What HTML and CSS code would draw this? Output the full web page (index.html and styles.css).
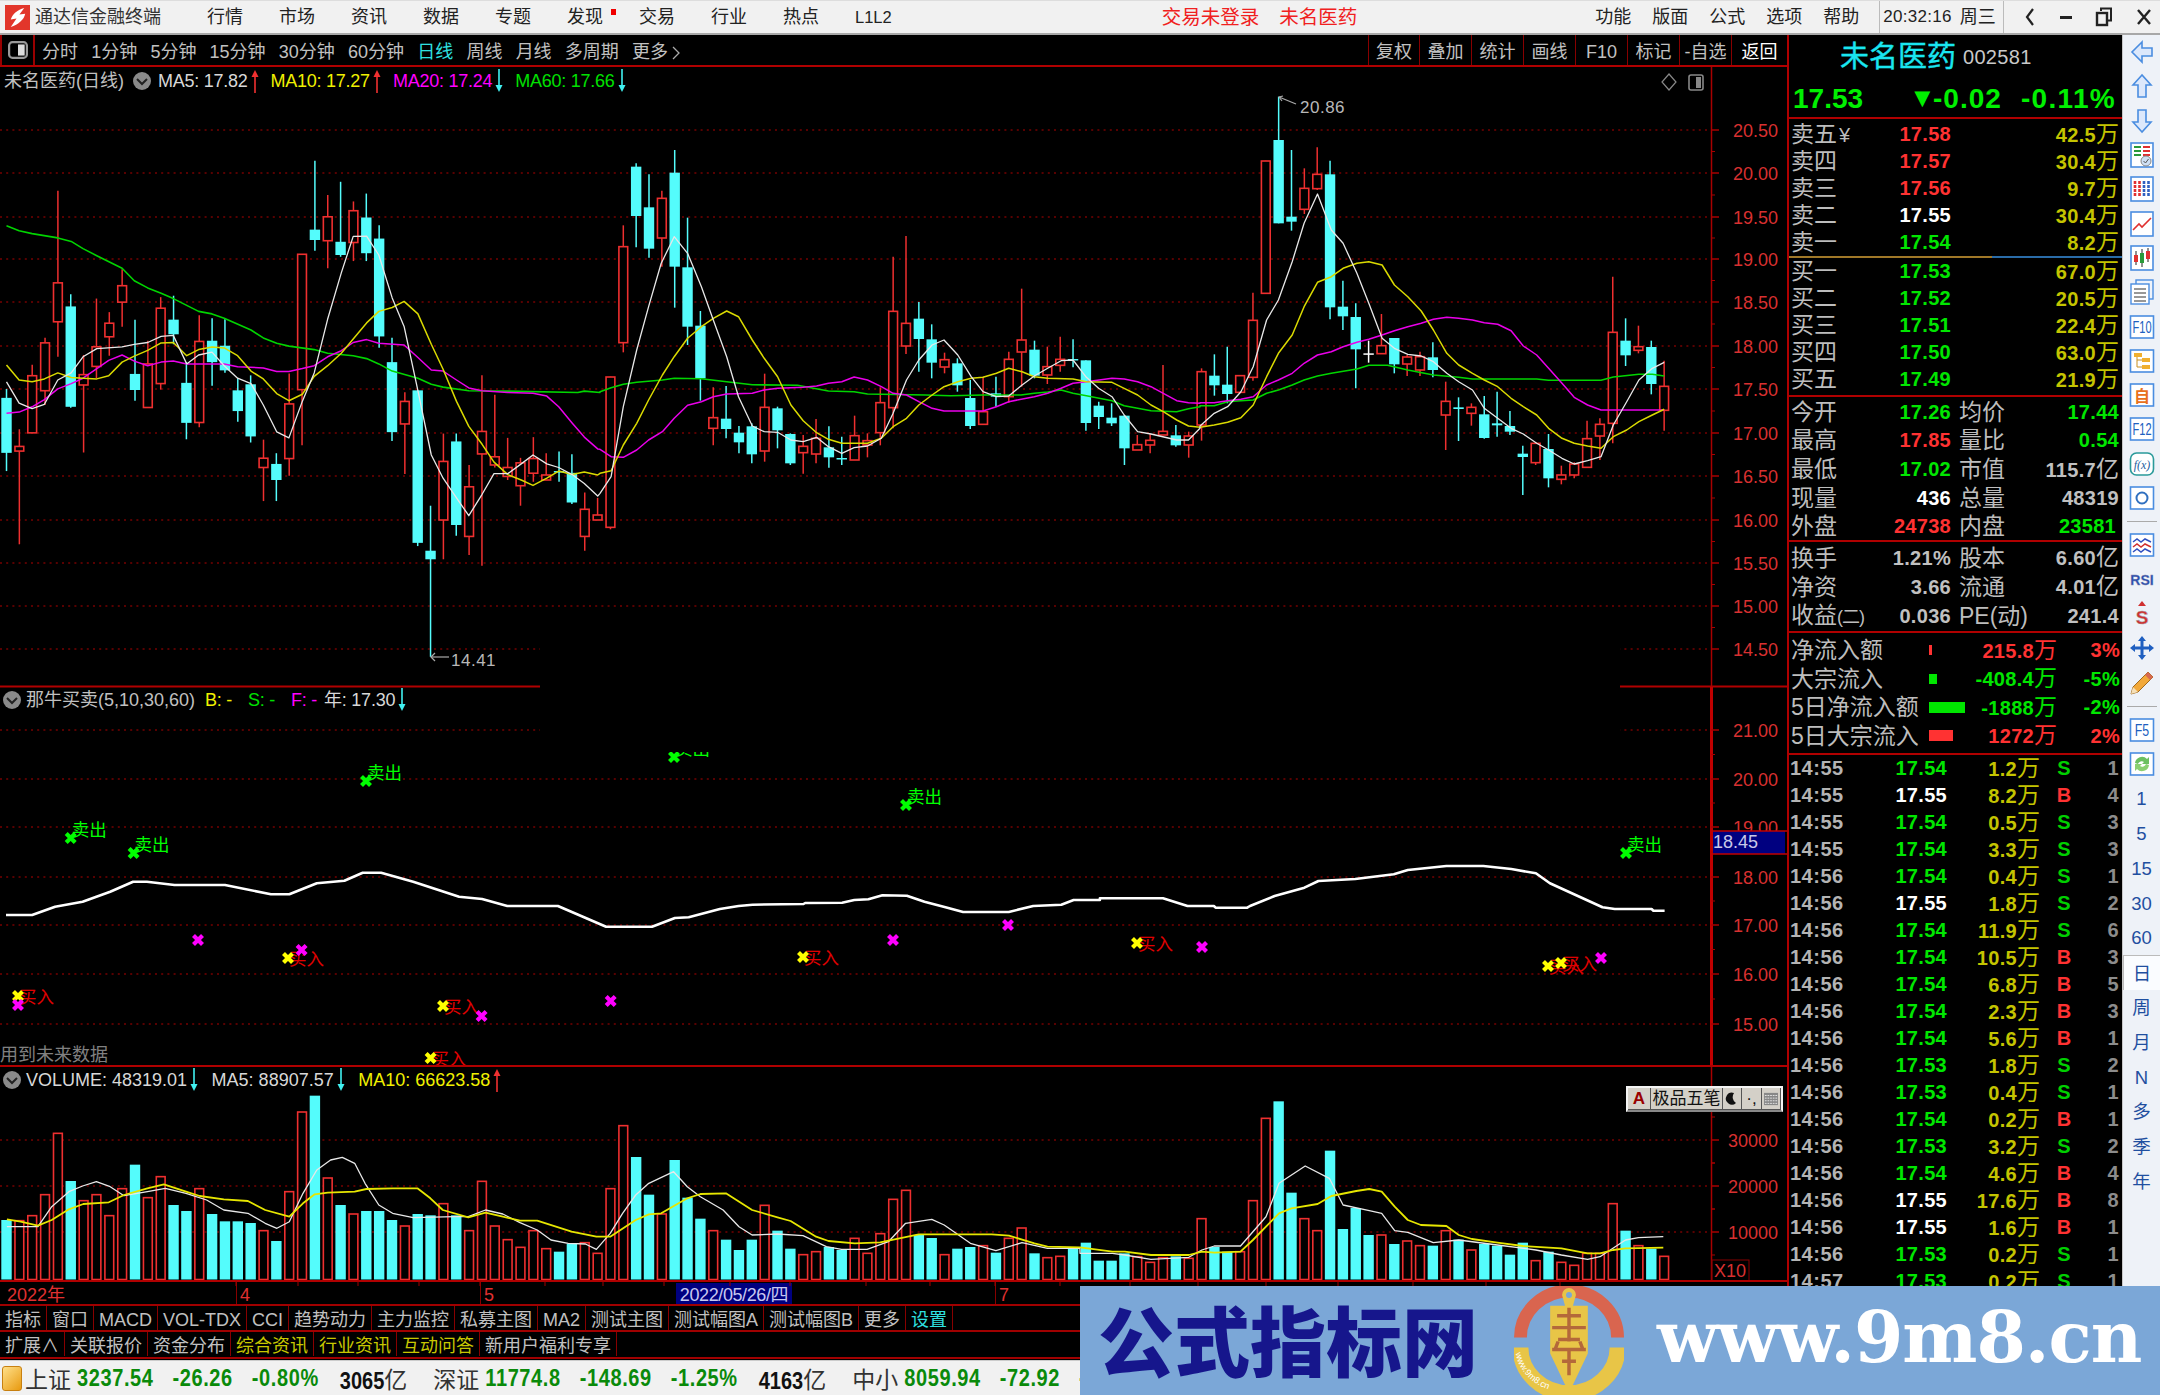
FILE: index.html
```html
<!DOCTYPE html>
<html lang="zh-CN">
<head>
<meta charset="utf-8">
<title>通达信金融终端</title>
<link rel="stylesheet" href="styles.css">
</head>
<body>
<svg class="defs" width="0" height="0">
  <symbol id="ar-up" viewBox="0 0 8 24"><path d="M4 24V3" stroke="currentColor" stroke-width="1.6"/><path d="M0.5 8 4 1l3.500 7z" fill="currentColor"/></symbol>
  <symbol id="ar-down" viewBox="0 0 8 24"><path d="M4 0v21" stroke="currentColor" stroke-width="1.6"/><path d="M0.500 16 4 23l3.500-7z" fill="currentColor"/></symbol>
  <symbol id="chev" viewBox="0 0 18 18"><circle cx="9" cy="9" r="9" fill="#8a8a8a"/><path d="M4 7l5 5 5-5" fill="none" stroke="#222" stroke-width="2"/></symbol>
</svg>

<header class="topbar">
  <svg class="logo" viewBox="0 0 26 26"><rect width="26" height="26" fill="#e2362b"/><path d="M20 3C13 5 8 9 6 15l6-1-6 9c8-3 14-8 15-14l-6 1z" fill="#fff"/></svg>
  <span class="app-title">通达信金融终端</span>
  <nav class="menu">
    <span>行情</span><span>市场</span><span>资讯</span><span>数据</span><span>专题</span><span class="dot">发现</span><span>交易</span><span>行业</span><span>热点</span><span class="l1">L1L2</span>
  </nav>
  <span class="alert first">交易未登录</span>
  <span class="alert">未名医药</span>
  <nav class="menu right">
    <span>功能</span><span>版面</span><span>公式</span><span>选项</span><span>帮助</span>
  </nav>
  <div class="clock"><span class="clock-t">20:32:16</span><span>周三</span></div>
  <div class="winctl">
    <svg viewBox="0 0 12 20"><path d="M9 2 3 10l6 8" fill="none" stroke="#222" stroke-width="2.200"/></svg>
    <svg viewBox="0 0 14 20"><rect x="1" y="9" width="12" height="3" fill="#222"/></svg>
    <svg viewBox="0 0 18 20"><path d="M6 4V1.500h10v12h-3" fill="none" stroke="#222" stroke-width="2"/><rect x="2" y="6" width="10" height="12" fill="none" stroke="#222" stroke-width="2.400"/></svg>
    <svg viewBox="0 0 16 20"><path d="M2 3l12 14M14 3 2 17" stroke="#222" stroke-width="2.400"/></svg>
  </div>
</header>

<main class="main">
  <section class="left">
    <div class="toolbar">
      <div class="tb-icon"><svg viewBox="0 0 18 18"><rect x="1" y="2" width="16" height="14" rx="3" fill="none" stroke="#999" stroke-width="2"/><rect x="9" y="4" width="6" height="10" fill="#ddd"/></svg></div>
      <div class="tb-periods">
        <span>分时</span><span>1分钟</span><span>5分钟</span><span>15分钟</span><span>30分钟</span><span>60分钟</span><span class="on">日线</span><span>周线</span><span>月线</span><span>多周期</span><span class="more">更多<svg viewBox="0 0 8 16"><path d="M1 2l6 6-6 6" fill="none" stroke="#aaa" stroke-width="1.300"/></svg></span>
      </div>
      <div class="tb-tools">
        <span class="n">复权</span><span>叠加</span><span>统计</span><span>画线</span><span>F10</span><span>标记</span><span>-自选</span><span class="w">返回</span>
      </div>
    </div>

    <div class="pane pane-price">
      <svg id="svgPrice" class="canvas" viewBox="0 67 1787 620"></svg>
      <div class="legend">
        <span class="lg-name">未名医药(日线)</span>
        <svg class="chev"><use href="#chev"/></svg>
        <span class="lg lg-w">MA5: 17.82</span><svg class="ar c-r"><use href="#ar-up"/></svg>
        <span class="lg lg-y">MA10: 17.27</span><svg class="ar c-r"><use href="#ar-up"/></svg>
        <span class="lg lg-m">MA20: 17.24</span><svg class="ar c-c"><use href="#ar-down"/></svg>
        <span class="lg lg-g">MA60: 17.66</span><svg class="ar c-c"><use href="#ar-down"/></svg>
      </div>
    </div>

    <div class="pane pane-ind">
      <svg id="svgInd" class="canvas" viewBox="0 687 1787 380"></svg>
      <div class="legend legend-ind">
        <svg class="chev first"><use href="#chev"/></svg>
        <span class="lg-name">那牛买卖(5,10,30,60)</span>
        <span class="lg lg-y">B: -</span>
        <span class="lg lg-g">S: -</span>
        <span class="lg lg-m">F: -</span>
        <span class="lg lg-w year">年: 17.30</span><svg class="ar c-c"><use href="#ar-down"/></svg>
      </div>
      <span class="future">用到未来数据</span>
    </div>

    <div class="pane pane-vol">
      <svg id="svgVol" class="canvas" viewBox="0 1067 1787 215"></svg>
      <div class="legend legend-vol">
        <svg class="chev first"><use href="#chev"/></svg>
        <span class="lg lg-w">VOLUME: 48319.01</span><svg class="ar c-c"><use href="#ar-down"/></svg>
        <span class="lg lg-w">MA5: 88907.57</span><svg class="ar c-c"><use href="#ar-down"/></svg>
        <span class="lg lg-y">MA10: 66623.58</span><svg class="ar c-r"><use href="#ar-up"/></svg>
      </div>
      <div class="ime">
        <span class="ime-a">A</span><span class="ime-t">极品五笔</span>
        <span class="ime-b"><svg viewBox="0 0 12 14"><path d="M8 1a6 6 0 1 0 2 10A7 7 0 0 1 8 1z" fill="#111"/></svg></span>
        <span class="ime-b">·,</span>
        <span class="ime-b"><svg viewBox="0 0 16 14"><rect width="16" height="14" fill="#888"/><path d="M1 3h14M1 6h14M1 9h14M1 12h14" stroke="#eee" stroke-dasharray="2 1"/></svg></span>
      </div>
    </div>

    <div class="datebar">
      <span class="d d1">2022年</span><span class="d d2">4</span><span class="d d3">5</span><span class="d d4">2022/05/26/四</span><span class="d d5"></span><span class="d d6">7</span>
    </div>
    <div class="tabs">
      <span>指标</span><span>窗口</span><span>MACD</span><span>VOL-TDX</span><span>CCI</span><span>趋势动力</span><span>主力监控</span><span>私募主图</span><span>MA2</span><span>测试主图</span><span>测试幅图A</span><span>测试幅图B</span><span>更多</span><span class="cy">设置</span>
    </div>
    <div class="tabs">
      <span>扩展∧</span><span>关联报价</span><span>资金分布</span><span class="ol">综合资讯</span><span class="ol">行业资讯</span><span class="ol">互动问答</span><span>新用户福利专享</span>
    </div>
  </section>

  <aside class="panel">
    <div class="head">
      <div class="name-row"><span class="stock">未名医药</span><span class="code">002581</span></div>
      <div class="price-row"><span class="p-now">17.53</span><span class="p-tri">▼</span><span class="p-chg">-0.02</span><span class="p-pct">-0.11%</span></div>
    </div>
    <div class="book">
      <div class="bk"><span>卖五<i class="yen">¥</i></span><b class="r">17.58</b><b class="o">42.5<i>万</i></b></div>
      <div class="bk"><span>卖四</span><b class="r">17.57</b><b class="o">30.4<i>万</i></b></div>
      <div class="bk"><span>卖三</span><b class="r">17.56</b><b class="o">9.7<i>万</i></b></div>
      <div class="bk"><span>卖二</span><b class="w">17.55</b><b class="o">30.4<i>万</i></b></div>
      <div class="bk"><span>卖一</span><b class="g">17.54</b><b class="o">8.2<i>万</i></b></div>
    </div>
    <div class="split"></div>
    <div class="book buy">
      <div class="bk"><span>买一</span><b class="g">17.53</b><b class="o">67.0<i>万</i></b></div>
      <div class="bk"><span>买二</span><b class="g">17.52</b><b class="o">20.5<i>万</i></b></div>
      <div class="bk"><span>买三</span><b class="g">17.51</b><b class="o">22.4<i>万</i></b></div>
      <div class="bk"><span>买四</span><b class="g">17.50</b><b class="o">63.0<i>万</i></b></div>
      <div class="bk"><span>买五</span><b class="g">17.49</b><b class="o">21.9<i>万</i></b></div>
    </div>
    <div class="stats">
      <div class="st"><span>今开</span><b class="g">17.26</b><span class="l2">均价</span><b class="g">17.44</b></div>
      <div class="st"><span>最高</span><b class="r">17.85</b><span class="l2">量比</span><b class="g">0.54</b></div>
      <div class="st"><span>最低</span><b class="g">17.02</b><span class="l2">市值</span><b class="gy">115.7<i>亿</i></b></div>
      <div class="st"><span>现量</span><b class="w">436</b><span class="l2">总量</span><b class="gy">48319</b></div>
      <div class="st"><span>外盘</span><b class="r">24738</b><span class="l2">内盘</span><b class="g pad">23581</b></div>
    </div>
    <div class="stats mid">
      <div class="st"><span>换手</span><b class="gy">1.21%</b><span class="l2">股本</span><b class="gy">6.60<i>亿</i></b></div>
      <div class="st"><span>净资</span><b class="gy">3.66</b><span class="l2">流通</span><b class="gy">4.01<i>亿</i></b></div>
      <div class="st"><span>收益<small>(二)</small></span><b class="gy">0.036</b><span class="l2">PE(动)</span><b class="gy">241.4</b></div>
    </div>
    <div class="stats flows">
      <div class="fl"><span>净流入额</span><em class="bar b1"></em><b class="r">215.8<i>万</i></b><b class="r">3%</b></div>
      <div class="fl"><span>大宗流入</span><em class="bar b2"></em><b class="g">-408.4<i>万</i></b><b class="g">-5%</b></div>
      <div class="fl"><span>5日净流入额</span><em class="bar b3"></em><b class="g">-1888<i>万</i></b><b class="g">-2%</b></div>
      <div class="fl"><span>5日大宗流入</span><em class="bar b4"></em><b class="r">1272<i>万</i></b><b class="r">2%</b></div>
    </div>
    <div class="trades">
      <div class="tr"><b>14:55</b><b class="g">17.54</b><b class="o">1.2<i>万</i></b><b class="gs">S</b><b class="n">1</b></div>
      <div class="tr"><b>14:55</b><b class="w">17.55</b><b class="o">8.2<i>万</i></b><b class="rb">B</b><b class="n">4</b></div>
      <div class="tr"><b>14:55</b><b class="g">17.54</b><b class="o">0.5<i>万</i></b><b class="gs">S</b><b class="n">3</b></div>
      <div class="tr"><b>14:55</b><b class="g">17.54</b><b class="o">3.3<i>万</i></b><b class="gs">S</b><b class="n">3</b></div>
      <div class="tr"><b>14:56</b><b class="g">17.54</b><b class="o">0.4<i>万</i></b><b class="gs">S</b><b class="n">1</b></div>
      <div class="tr"><b>14:56</b><b class="w">17.55</b><b class="o">1.8<i>万</i></b><b class="gs">S</b><b class="n">2</b></div>
      <div class="tr"><b>14:56</b><b class="g">17.54</b><b class="o">11.9<i>万</i></b><b class="gs">S</b><b class="n">6</b></div>
      <div class="tr"><b>14:56</b><b class="g">17.54</b><b class="o">10.5<i>万</i></b><b class="rb">B</b><b class="n">3</b></div>
      <div class="tr"><b>14:56</b><b class="g">17.54</b><b class="o">6.8<i>万</i></b><b class="rb">B</b><b class="n">5</b></div>
      <div class="tr"><b>14:56</b><b class="g">17.54</b><b class="o">2.3<i>万</i></b><b class="rb">B</b><b class="n">3</b></div>
      <div class="tr"><b>14:56</b><b class="g">17.54</b><b class="o">5.6<i>万</i></b><b class="rb">B</b><b class="n">1</b></div>
      <div class="tr"><b>14:56</b><b class="g">17.53</b><b class="o">1.8<i>万</i></b><b class="gs">S</b><b class="n">2</b></div>
      <div class="tr"><b>14:56</b><b class="g">17.53</b><b class="o">0.4<i>万</i></b><b class="gs">S</b><b class="n">1</b></div>
      <div class="tr"><b>14:56</b><b class="g">17.54</b><b class="o">0.2<i>万</i></b><b class="rb">B</b><b class="n">1</b></div>
      <div class="tr"><b>14:56</b><b class="g">17.53</b><b class="o">3.2<i>万</i></b><b class="gs">S</b><b class="n">2</b></div>
      <div class="tr"><b>14:56</b><b class="g">17.54</b><b class="o">4.6<i>万</i></b><b class="rb">B</b><b class="n">4</b></div>
      <div class="tr"><b>14:56</b><b class="w">17.55</b><b class="o">17.6<i>万</i></b><b class="rb">B</b><b class="n">8</b></div>
      <div class="tr"><b>14:56</b><b class="w">17.55</b><b class="o">1.6<i>万</i></b><b class="rb">B</b><b class="n">1</b></div>
      <div class="tr"><b>14:56</b><b class="g">17.53</b><b class="o">0.2<i>万</i></b><b class="gs">S</b><b class="n">1</b></div>
      <div class="tr"><b>14:57</b><b class="g">17.53</b><b class="o">0.2<i>万</i></b><b class="gs">S</b><b class="n">1</b></div>
    </div>
  </aside>

  <aside class="side">
    <div class="si"><svg viewBox="0 0 26 26"><path d="M13 3 3 13l10 10v-6h10V9H13z" fill="#dce8fb" stroke="#4a8de0" stroke-width="1.600"/></svg></div>
    <div class="si"><svg viewBox="0 0 26 26"><path d="M13 2 4 12h5v12h8V12h5z" fill="#dce8fb" stroke="#4a8de0" stroke-width="1.600"/></svg></div>
    <div class="si"><svg viewBox="0 0 26 26"><path d="M13 24 4 14h5V2h8v12h5z" fill="#dce8fb" stroke="#4a8de0" stroke-width="1.600"/></svg></div>
    <div class="si"><svg viewBox="0 0 26 26"><rect x="2" y="1" width="22" height="24" fill="#fff" stroke="#4a8de0" stroke-width="1.600"/><path d="M5 5h7M5 9h7M5 13h7" stroke="#2a9a3a" stroke-width="2"/><path d="M14 5h7M14 9h7M14 13h7" stroke="#e03030" stroke-width="2"/><circle cx="17" cy="19" r="5" fill="#cfe0f5" stroke="#888"/><path d="M14.500 19l2 2 3-4" fill="none" stroke="#555"/></svg></div>
    <div class="si"><svg viewBox="0 0 26 26"><rect x="2" y="1" width="22" height="24" fill="#fff" stroke="#4a8de0" stroke-width="1.600"/><path d="M6 5v16M10.500 5v16" stroke="#e03030" stroke-width="2.600" stroke-dasharray="3 1"/><path d="M15 5v16M19.500 5v16" stroke="#3060c0" stroke-width="2.600" stroke-dasharray="3 1"/></svg></div>
    <div class="si"><svg viewBox="0 0 26 26"><rect x="2" y="1" width="22" height="24" fill="#fff" stroke="#4a8de0" stroke-width="1.600"/><path d="M4 19l6-6 3 3 9-9" fill="none" stroke="#e03030" stroke-width="1.600"/></svg></div>
    <div class="si"><svg viewBox="0 0 26 26"><rect x="2" y="1" width="22" height="24" fill="#fff" stroke="#4a8de0" stroke-width="1.600"/><path d="M7 6v14M13 4v18M19 3v14" stroke="#222"/><rect x="5" y="10" width="4" height="7" fill="#e03030"/><rect x="11" y="8" width="4" height="10" fill="#2a9a3a"/><rect x="17" y="6" width="4" height="8" fill="#e03030"/></svg></div>
    <div class="si"><svg viewBox="0 0 26 26"><rect x="7" y="1" width="17" height="19" fill="#eef3fb" stroke="#4a8de0" stroke-width="1.400"/><rect x="2" y="5" width="18" height="20" fill="#fff" stroke="#4a8de0" stroke-width="1.400"/><path d="M5 10h12M5 14h12M5 18h12M5 22h12" stroke="#777" stroke-width="1.500"/></svg></div>
    <div class="si"><svg viewBox="0 0 26 26"><rect x="1.500" y="2" width="23" height="22" fill="#fff" stroke="#4a8de0" stroke-width="1.600"/><text class="si-t" text-anchor="middle" transform="translate(13 18.500) scale(.85 1.200)">F10</text></svg></div>
    <div class="si"><svg viewBox="0 0 26 26"><rect x="1.500" y="2" width="23" height="22" fill="#fff" stroke="#4a8de0" stroke-width="1.600"/><path d="M8 7v12h5M8 12h5" fill="none" stroke="#c89020"/><rect x="5" y="5" width="8" height="4" fill="#f0b030"/><rect x="13" y="10" width="8" height="4" fill="#f0b030"/><rect x="13" y="17" width="8" height="4" fill="#f0b030"/></svg></div>
    <div class="si"><svg viewBox="0 0 26 26"><rect x="1.500" y="2" width="23" height="22" fill="#fff" stroke="#4a8de0" stroke-width="1.600"/><text class="si-z" x="13" y="19.500" text-anchor="middle">自</text></svg></div>
    <div class="si"><svg viewBox="0 0 26 26"><rect x="1.500" y="2" width="23" height="22" fill="#fff" stroke="#4a8de0" stroke-width="1.600"/><text class="si-t" text-anchor="middle" transform="translate(13 18.500) scale(.85 1.200)">F12</text></svg></div>
    <div class="si"><svg viewBox="0 0 26 26"><rect x="1.500" y="2" width="23" height="22" rx="6" fill="#fff" stroke="#2a9a9a" stroke-width="1.600"/><text class="si-f" x="13" y="18" text-anchor="middle">f(x)</text></svg></div>
    <div class="si"><svg viewBox="0 0 26 26"><rect x="1.500" y="2" width="23" height="22" fill="#fff" stroke="#4a8de0" stroke-width="1.600"/><circle cx="13" cy="13" r="5.500" fill="none" stroke="#3070c0" stroke-width="2"/></svg></div>
    <div class="si-sep"></div>
    <div class="si"><svg viewBox="0 0 26 26"><rect x="1.500" y="2" width="23" height="22" fill="#fff" stroke="#4a8de0" stroke-width="1.600"/><path d="M4 10l4-3 4 3 4-3 6 3" fill="none" stroke="#3050c0" stroke-width="1.500"/><path d="M4 15l4-3 4 3 4-3 6 3" fill="none" stroke="#d03030" stroke-width="1.500"/><path d="M4 20l4-3 4 3 4-3 6 3" fill="none" stroke="#3050c0" stroke-width="1.500"/></svg></div>
    <div class="si"><svg viewBox="0 0 26 26"><text class="si-r" x="13" y="18" text-anchor="middle">RSI</text></svg></div>
    <div class="si"><svg viewBox="0 0 26 26"><path d="M13 0l4 5H9z" fill="#d03030"/><text class="si-s" x="13" y="23" text-anchor="middle">S</text></svg></div>
    <div class="si"><svg viewBox="0 0 26 26"><path d="M13 1l4 5h-2.500v5.500H20V9l5 4-5 4v-2.500h-5.500V20H17l-4 5-4-5h2.500v-5.500H6V17l-5-4 5-4v2.500h5.500V6H9z" fill="#1f5fc0"/></svg></div>
    <div class="si"><svg viewBox="0 0 26 26"><path d="M19 3l5 5L9 23l-7 2 2-7z" fill="#f2a93a" stroke="#a06a20"/><path d="M19 3l5 5-3 3-5-5z" fill="#d86a50"/><path d="M2 25l2-7 5 5z" fill="#f5e0b8"/></svg></div>
    <div class="si-sep"></div>
    <div class="si"><svg viewBox="0 0 26 26"><rect x="1.500" y="2" width="23" height="22" fill="#fff" stroke="#4a8de0" stroke-width="1.600"/><text class="si-t" text-anchor="middle" transform="translate(13 18.500) scale(.95 1.200)">F5</text></svg></div>
    <div class="si"><svg viewBox="0 0 26 26"><rect x="1.500" y="2" width="23" height="22" fill="#fff" stroke="#4a8de0" stroke-width="1.600"/><path d="M6 12a7 7 0 0 1 12-4l2-2v7h-7l2-2a4 4 0 0 0-6 2z" fill="#6cc060"/><path d="M20 14a7 7 0 0 1-12 4l-2 2v-7h7l-2 2a4 4 0 0 0 6-2z" fill="#8ad070"/></svg></div>
    <div class="si-tx">1</div><div class="si-tx">5</div><div class="si-tx">15</div><div class="si-tx">30</div><div class="si-tx">60</div>
    <div class="si-tx active">日</div>
    <div class="si-tx">周</div><div class="si-tx">月</div><div class="si-tx">N</div><div class="si-tx">多</div><div class="si-tx">季</div><div class="si-tx">年</div>
  </aside>
</main>

<footer class="status">
  <span class="st-ico"></span>
  <span class="s-l">上证</span><span class="s-n">3237.54</span><span class="s-n">-26.26</span><span class="s-n">-0.80%</span><span class="s-a"><u>3065</u><i>亿</i></span>
  <span class="s-l">深证</span><span class="s-n">11774.8</span><span class="s-n">-148.69</span><span class="s-n">-1.25%</span><span class="s-a"><u>4163</u><i>亿</i></span>
  <span class="s-l">中小</span><span class="s-n">8059.94</span><span class="s-n">-72.92</span><span class="s-n">-</span>
</footer>

<div class="wm">
  <span class="wm-cn">公式指标网</span>
  <svg class="wm-logo" viewBox="0 0 110 110">
    <path d="M6 52A49 47 0 0 1 104 52" fill="none" stroke="#d9654f" stroke-width="13"/>
    <path d="M6 62A49 46 0 0 0 104 62" fill="none" stroke="#e8c547" stroke-width="16"/>
    <path id="wmArc" d="M1 68A52 48 0 0 0 40 106" fill="none"/>
    <path d="M55 2a7 7 0 0 1 7 7l-3 11h15v48L55 108 36 68V20h15L48 9a7 7 0 0 1 7-7z" fill="#e8c547"/>
    <circle cx="55" cy="9" r="3" fill="#7ba7d7"/>
    <path d="M43 30h24M55 22v34M38 42h34M44 54h22M38 64h34M48 76h14M55 64v26M44 56l-3 8M66 56l3 8" stroke="#b4683a" stroke-width="3.500" fill="none"/>
    <text class="wm-small"><textPath href="#wmArc">www.9m8.cn</textPath></text>
  </svg>
  <span class="wm-en">www.9m8.cn</span>
</div>

<script src="chart.js"></script>
</body>
</html>
```

FILE: styles.css
```css
* { box-sizing: border-box; }
html, body { margin: 0; padding: 0; }
body {
  width: 2160px; height: 1395px; overflow: hidden; position: relative;
  background: #000; color: #c0c0c0;
  font-family: "Liberation Sans", "Noto Sans CJK SC", sans-serif;
  font-size: 18px; display: flex; flex-direction: column;
}
i, em { font-style: normal; }
u { text-decoration: none; }
.defs { position: absolute; }

/* top bar */
.topbar {
  height: 35px; flex: none; background: #f1f1f1; color: #222;
  border-bottom: 2px solid #a8a8a8; border-top: 1px solid #ddd;
  display: flex; align-items: center; line-height: 30px;
}
.logo { width: 25px; height: 25px; margin-left: 5px; flex: none; }
.app-title { margin-left: 5px; color: #333; }
.menu { display: flex; gap: 36px; margin-left: 46px; }
.menu .dot { position: relative; }
.menu .dot::after { content: ""; position: absolute; left: 44px; top: 7px; width: 5px; height: 6px; background: #f00000; }
.menu .l1 { font-size: 16.500px; margin-right: 3px; }
.alert { color: #f02020; font-size: 19.500px; }
.alert.first { margin-left: 267px; margin-right: 20px; }
.menu.right { margin-left: 238px; gap: 21px; }
.clock { margin-left: 20px; height: 32px; width: 125px; display: flex; gap: 8px; align-items: center; border-left: 1px solid #bbb; border-right: 1px solid #bbb; padding-left: 3px; }
.clock-t { font-size: 17px; letter-spacing: .3px; }
.winctl { display: flex; align-items: center; margin-left: 20px; gap: 22.500px; }
.winctl svg { height: 20px; width: auto; flex: none; }
.winctl svg:nth-child(1) { width: 12px; }
.winctl svg:nth-child(2) { width: 14px; }
.winctl svg:nth-child(3) { width: 18px; }
.winctl svg:nth-child(4) { width: 16px; }

/* main layout */
.main { flex: none; height: 1325px; display: flex; }
.left { width: 1787px; flex: none; display: flex; flex-direction: column; }
.toolbar { height: 32px; flex: none; display: flex; align-items: stretch; border-bottom: 2px solid #b00000; line-height: 35px; }
.tb-icon { width: 35px; border-left: 2px solid #900; border-right: 2px solid #900; display: flex; align-items: center; justify-content: center; }
.tb-icon svg { width: 20px; height: 20px; }
.tb-periods { display: flex; gap: 13.200px; margin-left: 7px; }
.tb-periods .on { color: #2fe0e0; }
.more svg { width: 8px; height: 16px; margin-left: 4px; vertical-align: -3px; }
.tb-tools { margin-left: auto; display: flex; }
.tb-tools span { width: 52px; text-align: center; border-left: 1.500px solid #800; }
.tb-tools .n { width: 51px; }
.tb-tools .w { width: 56px; }

.pane { position: relative; flex: none; z-index: 1; }
.pane-price { height: 620px; }
.pane-ind { height: 380px; }
.pane-vol { height: 215px; }
.canvas { position: absolute; left: 0; top: 0; width: 1787px; height: 100%; overflow: visible; display: block; }
.legend { position: absolute; left: 0; top: 1px; height: 26px; display: flex; align-items: center; white-space: nowrap; font-size: 18px; line-height: 26px; }
.lg-name { padding-left: 4px; color: #c0c0c0; }
.chev { width: 18px; height: 18px; margin: 0 7px 0 9px; flex: none; }
.chev.first { margin: 0 5px 0 3px; }
.legend-ind { top: 0; }
.legend-ind .lg-name { padding-left: 0; }
.legend-ind .lg { margin-left: 10px; }
.legend-ind .lg + .lg { margin-left: 16px; }
.legend-ind .year { margin-left: 7px !important; }
.legend-vol { top: 0; }
.lg { letter-spacing: -.25px; }
.legend-vol .lg { letter-spacing: 0; }
.legend-vol .ar { margin-right: 13.500px; }
.lg-w { color: #d8d8d8; } .lg-y { color: #f0f000; } .lg-m { color: #ff00ff; } .lg-g { color: #00e000; }
.ar { width: 8px; height: 24px; margin: 0 12px 0 3px; flex: none; }
.c-r { color: #f03030; } .c-c { color: #40f0f0; }
.future { position: absolute; left: 0; top: 356px; color: #808080; line-height: 24px; }
.ime {
  position: absolute; left: 1626px; top: 19px; width: 157px; height: 26px; display: flex; align-items: stretch;
  background: #d4d0c8; border: 2px solid #f4f4f4; border-bottom-color: #888; color: #111; font-size: 17px; line-height: 21px;
}
.ime span { border-right: 1px solid #555; border-bottom: 1px solid #555; display: flex; align-items: center; justify-content: center; }
.ime-a { width: 23px; color: #900; font-weight: bold; }
.ime-t { width: 72px; }
.ime-b { flex: 1; }
.ime-b svg { width: 14px; height: 14px; }

.datebar { height: 24px; flex: none; display: flex; border-bottom: 2px solid #a00000; color: #e03030; line-height: 27px; }
.d { display: block; white-space: nowrap; }
.d1 { width: 236px; padding-left: 7px; }
.d2 { width: 244px; border-left: 1px solid #800; padding-left: 3px; }
.d3 { width: 196px; border-left: 1px solid #800; padding-left: 3px; }
.d4 { width: 116px; background: #000080; color: #c8c8f0; text-align: center; letter-spacing: -.4px; line-height: 24px; margin-top: 1px; }
.d5 { width: 203px; }
.d6 { border-left: 1px solid #800; padding-left: 3px; }

.tabs { height: 26px; flex: none; display: flex; border-bottom: 2px solid #a00000; line-height: 28px; }
.tabs + .tabs { height: 27px; }
.tabs span { padding: 0 5px; border-right: 1px solid #800; white-space: nowrap; color: #c0c0c0; height: 24px; }
.tabs .cy { color: #2fe0e0; }
.tabs .ol { color: #c8c800; }

/* right quote panel */
.panel { width: 335px; flex: none; border-left: 2px solid #b00000; overflow: hidden; position: relative; font-size: 23px; color: #bdbdbd; }
.panel b { font-size: 20px; font-weight: bold; letter-spacing: .3px; text-align: right; white-space: nowrap; }
.panel i { font-size: 23px; font-weight: normal; letter-spacing: 0; }
.panel small { font-size: 18px; letter-spacing: -1px; }
.g { color: #00e600; } .r { color: #ff3232; } .w { color: #fff; } .o { color: #c4c400; } .gy { color: #c0c0c0; } .gs { color: #00d000; } .rb { color: #ff3232; }
.head { height: 84px; border-bottom: 2px solid #b00000; }
.name-row { height: 45px; display: flex; align-items: center; padding: 0 0 0 51px; line-height: 45px; }
.stock { color: #19e6f0; font-size: 29px; -webkit-text-stroke: .4px #19e6f0; }
.code { margin-left: 7px; font-size: 20px; color: #c8c8c8; letter-spacing: .3px; }
.price-row { display: flex; align-items: center; height: 37px; color: #00f000; font-weight: bold; font-size: 28px; }
.p-now { margin-left: 4px; width: 116px; }
.p-tri { width: 24px; font-size: 27px; }
.p-chg { width: 88px; letter-spacing: 1px; }
.p-pct { letter-spacing: 1.300px; }
.book { height: 136.500px; padding-top: 1.500px; }
.book.buy { height: 139px; padding-top: 0; border-bottom: 2px solid #b00000; }
.bk { height: 27px; display: grid; grid-template-columns: 69px 91px 168px; padding-left: 2px; line-height: 27px; align-items: center; }
.yen { font-size: 20px !important; margin-left: 2px; }
.split { height: 2px; background: linear-gradient(90deg, #a07828 0 203px, #2a6ca8 203px); }
.stats { border-bottom: 2px solid #b00000; padding-top: 1px; }
.stats.mid { padding-bottom: 2px; }
.stats.flows { padding-top: 2.400px; padding-bottom: 2.500px; }
.stats > .st { height: 28.600px; display: grid; grid-template-columns: 69px 91px 63px 105px; padding-left: 2px; line-height: 28px; align-items: center; white-space: nowrap; }
.l2 { padding-left: 8px; }
.pad { padding-right: 3px; }
.fl { height: 28.600px; display: grid; grid-template-columns: 138px 40px 88px 63px; padding-left: 2px; line-height: 28px; align-items: center; white-space: nowrap; }
.bar { display: block; }
.b1 { width: 3px; height: 10px; background: #ff3232; }
.b2 { width: 8px; height: 10px; background: #00e600; }
.b3 { width: 36px; height: 11px; background: #00e600; }
.b4 { width: 24px; height: 11px; background: #ff3232; }
.trades { padding-top: 0; }
.tr { height: 27px; display: grid; grid-template-columns: 60px 97px 93px 48px 31px; padding-left: 1px; line-height: 27px; align-items: center; }
.tr b:first-child { text-align: left; color: #b4b4b4; letter-spacing: .5px; }
.tr .gs, .tr .rb { text-align: center; }
.tr .n { color: #8c8c8c; }

/* sidebar */
.side { width: 38px; flex: none; background: #eef2f8; border-left: 1px solid #c8c8c8; padding-top: 0; display: flex; flex-direction: column; align-items: center; color: #1f4fa0; }
.si { height: 34.300px; flex: none; display: flex; align-items: center; justify-content: center; width: 100%; }
.si svg { width: 26px; height: 26px; }
.si-sep { height: 13px; flex: none; width: 30px; position: relative; }
.si-sep::after { content: ""; position: absolute; left: 0; right: 0; top: 6px; height: 1px; background: #aaa; }
.si-tx { height: 34.800px; flex: none; width: 100%; text-align: center; line-height: 36px; font-size: 18.500px; }
.si-tx.active { background: #fafcff; border-top: 1px solid #bbb; border-left: 1px solid #bbb; }
.si-t { font: 13px "Liberation Sans", sans-serif; fill: #2060c0; }
.si-z { font: bold 16px "Noto Sans CJK SC", sans-serif; fill: #e87020; }
.si-f { font: italic 12px "Liberation Serif", serif; fill: #1f5fa0; }
.si-r { font: bold 14px "Liberation Sans", sans-serif; fill: #2a50b0; stroke: #88a; stroke-width: .3; }
.si-s { font: bold 19px "Liberation Sans", sans-serif; fill: #d03030; stroke: #aaa; stroke-width: .5; }

/* status */
.status { height: 35px; flex: none; background: #f1f1f1; color: #222; display: flex; align-items: center; white-space: nowrap; position: relative; z-index: 2; border-top: 1px solid #ccc; }
.st-ico { width: 20px; height: 25px; margin-left: 2px; flex: none; background: linear-gradient(135deg, #ffe08a, #e89a10); border: 1px solid #c88010; border-radius: 3px; }
.s-l { font-size: 23px; margin-left: 26px; color: #333; }
.st-ico + .s-l { margin-left: 3px; }
.s-n { display: inline-block; transform: scaleY(1.150); font-size: 20px; font-weight: bold; color: #0a8a0a; margin-left: 19px; letter-spacing: .6px; }
.s-l + .s-n { margin-left: 6px; }
.s-a { font-size: 20px; font-weight: bold; color: #111; margin-left: 21px; }
.s-a u { display: inline-block; transform: scaleY(1.150); }
.s-a i { font-size: 23px; font-weight: normal; color: #333; }

/* watermark banner over the bottom right */
.wm { position: absolute; left: 1080px; top: 1286px; width: 1080px; height: 109px; background: #7ba7d7; z-index: 5; display: flex; align-items: center; }
.wm-cn { width: 434px; padding: 0 0 6px 18px; font: 900 76px/1 "Noto Sans CJK SC", sans-serif; color: #16168c; white-space: nowrap; }
.wm-logo { width: 110px; height: 109px; flex: none; }
.wm-small { font: 9px "Liberation Sans", sans-serif; fill: #fff; }
.wm-en { margin-left: 33px; padding-bottom: 6px; font: bold 71px/1 "DejaVu Serif", serif; color: #fff; white-space: nowrap; letter-spacing: -1px; }

/* chart text */
.axis { font: 18px "Liberation Sans", sans-serif; fill: #d83030; }
.note { font: 17px "Liberation Sans", sans-serif; fill: #b8b8b8; letter-spacing: .5px; }
.sig { font: 17.500px "Noto Sans CJK SC", sans-serif; }
.navy { font: 18px "Liberation Sans", sans-serif; fill: #c8c8e8; }
```

FILE: chart.js
```js
(function () {
  var NS = 'http://www.w3.org/2000/svg';
  function el(parent, tag, attrs, text) {
    var n = document.createElementNS(NS, tag);
    for (var k in attrs) n.setAttribute(k, attrs[k]);
    if (text !== undefined) n.textContent = text;
    parent.appendChild(n);
    return n;
  }
  var CY = '#54fcfc', RD = '#ee2f2f', DOT = '#b00000', AX = '#a80000';
  function cx(i) { return 6.5 + 12.85 * i; }

  function hline(s, y, x1, x2, c, w, dash) {
    var a = { x1: x1, x2: x2, y1: y, y2: y, stroke: c, 'stroke-width': w || 1 };
    if (dash) a['stroke-dasharray'] = dash;
    el(s, 'line', a);
  }
  function vline(s, x, y1, y2, c, w) {
    el(s, 'line', { x1: x, x2: x, y1: y1, y2: y2, stroke: c, 'stroke-width': w || 1 });
  }
  function poly(s, pts, c, w) {
    el(s, 'polyline', { points: pts.map(function (p) { return p[0].toFixed(1) + ',' + p[1].toFixed(1); }).join(' '), fill: 'none', stroke: c, 'stroke-width': w, 'stroke-linejoin': 'round' });
  }

  /* ---------- price pane ---------- */
  var groups = [
    { oy: 130, sy: 2.8, rows: [
      [725,750,904,955,'c'],[838,886,899,1160,'r'],[657,688,848,848,'r'],[582,596,730,770,'r'],[170,428,537,635,'r'],
      [460,494,775,778,'c'],[630,685,714,903,'r'],[472,607,662,695,'r'],[510,541,579,632,'r'],[390,436,482,551,'r'],
      [531,683,728,758,'c'],[590,655,777,777,'r'],[468,499,710,727,'r'],[464,531,572,600,'c'],[650,708,820,866,'c'],
      [519,592,819,832,'r'],[527,590,650,716,'c'],[530,604,673,680,'c'],[695,729,787,817,'c'],[687,712,858,875,'c'],
      [867,919,945,1039,'r'],[905,935,980,1039,'c'],[682,767,920,968,'r'],[348,348,727,883,'r'],[86,279,308,338,'c'],
      [182,243,310,387,'r'],[145,313,350,355,'c'],[200,226,315,367,'r'],[178,245,345,367,'c'],[267,304,578,610,'c'],
      [582,650,846,871,'c'],[734,760,823,963,'r'],[729,729,1156,1165,'c'],[1052,1178,1202,1475,'c'],[850,928,1092,1202,'r'],
      [850,872,1106,1136,'c'],[938,999,1138,1190,'r'],[687,844,907,1220,'r'],[741,915,938,945,'r'],[862,945,970,980,'r'],
      [918,932,996,1052,'r'],[860,920,961,985,'r'],[905,966,980,980,'r'],[900,955,958,985,'c'],[908,960,1043,1047,'c'],
      [1015,1062,1138,1178,'r'],[1030,1078,1092,1092,'r']
    ] },
    { oy: 130, sy: 3, rows: [
      [740,741,1192,1198,'r'],[286,350,638,667,'r'],[100,110,258,352,'c'],[133,232,356,383,'c'],[182,205,324,410,'r'],
      [60,128,410,533,'c'],[263,412,590,645,'c'],[543,587,745,812,'c'],[772,863,895,946,'r'],[768,866,897,925,'c'],
      [888,908,937,970,'c'],[880,889,973,1000,'c'],[731,832,963,995,'r'],[830,835,901,955,'c'],[910,912,1000,1005,'c'],
      [915,949,968,1031,'r'],[867,925,972,1000,'r'],[889,952,982,1013,'c'],[920,984,987,1005,'c'],[857,917,990,990,'r'],
      [910,932,945,982,'r'],[772,818,908,946,'r'],[380,544,833,895,'r'],[318,580,648,672,'r'],[516,566,627,725,'c'],
      [583,628,698,745,'c'],[668,689,711,730,'r'],[685,700,766,785,'c'],[750,804,888,897,'c'],[740,845,883,883,'r'],
      [740,790,800,830,'c'],[665,688,800,818,'r'],[476,630,666,770,'r'],[632,659,737,745,'c'],[650,710,735,762,'r'],
      [620,688,706,725,'r'],[628,687,690,712,'c'],[691,691,879,902,'c'],[815,827,861,897,'c'],[820,863,880,888,'c'],
      [855,857,955,1005,'c'],[915,944,960,960,'r'],[912,931,945,970,'r'],[705,904,915,915,'r'],[885,916,946,950,'c'],
      [905,918,945,983,'r']
    ] },
    { oy: 90, sy: 3, rows: [
      [835,845,1005,1052,'r'],[793,857,886,917,'c'],[770,884,912,940,'c'],[855,857,907,910,'r'],[608,691,862,872,'r'],
      [212,213,610,610,'r'],[20,150,400,400,'c'],[180,380,395,422,'c'],[235,295,358,372,'r'],[172,253,296,300,'r'],
      [212,253,652,688,'c'],[572,650,679,720,'c'],[640,681,778,895,'c'],[752,790,792,818,'w'],[672,767,791,791,'r'],
      [744,744,823,850,'c'],[795,801,822,858,'r'],[785,800,840,858,'r'],[757,802,840,862,'c'],[875,934,975,1080,'r'],
      [922,952,957,1053,'c'],[940,952,970,1007,'r'],[918,973,1044,1046,'c'],[905,1000,1006,1040,'c'],[963,1008,1025,1035,'c'],
      [1067,1091,1101,1215,'c'],[1058,1060,1118,1125,'r'],[1032,1077,1165,1192,'c'],[1127,1155,1168,1183,'r'],[1117,1122,1155,1165,'r'],
      [992,1046,1132,1132,'r'],[985,1003,1038,1110,'r'],[560,727,1000,1060,'r'],[685,752,796,828,'c'],[707,770,781,790,'r'],
      [752,771,882,913,'c'],[812,889,961,1022,'r']
    ] }
  ];

  var segs = [{ ox: 0, oy: 130, sy: 2.8 }, { ox: 600, oy: 130, sy: 3 }, { ox: 1200, oy: 90, sy: 3 }];
  var MA = {
    w: [
      [17,705,50,765,84,780,116,768,151,700,186,680,217,635,253,612,319,607,351,600,386,595,421,578,453,575,488,655,519,630,554,622,586,660,621,695,656,710,688,770,723,845,755,862,790,760,821,680,856,530,892,400,923,298,958,297,990,350,1025,470,1056,550,1092,730,1127,910,1158,975,1193,1030,1225,1080,1260,1020,1291,962,1327,962,1362,935,1393,910,1429,935,1460,945,1495,965,1527,990,1562,1025],
      [0,1090,29,1040,61,830,96,660,127,530,160,400,194,320,229,370,265,470,296,570,331,680,362,800,398,888,429,905,464,907,499,930,531,935,566,922,597,950,632,970,664,953,699,948,735,925,766,850,801,750,833,690,868,645,899,630,935,675,970,740,1001,785,1036,800,1068,798,1103,765,1135,738,1170,715,1205,692,1236,690,1271,742,1303,775,1338,800,1370,855,1405,905,1440,912,1507,930,1538,930,1568,895],
      [0,1008,37,970,72,950,107,905,139,830,174,690,205,630,241,515,272,400,307,312,343,420,374,460,410,550,441,640,476,745,508,775,543,793,578,798,610,815,645,850,676,875,712,900,743,955,778,985,813,1015,845,1032,880,1060,911,1080,946,1105,978,1122,1013,1112,1048,1100,1080,1005,1115,935,1147,870,1182,835,1213,817]
    ],
    y: [
      [17,658,50,700,84,705,116,697,151,680,186,693,217,695,253,697,284,688,319,650,351,633,386,617,421,596,453,595,488,632,519,615,554,608,586,610,621,632,656,675,688,697,723,738,755,758,790,740,821,690,856,660,892,625,923,585,958,540,990,508,1025,497,1056,480,1092,515,1127,600,1158,670,1193,760,1225,830,1260,880,1291,930,1327,965,1362,980,1393,995,1429,975,1460,955,1495,965,1527,958,1562,966],
      [0,1030,29,1022,61,945,96,880,127,810,163,735,194,680,229,625,265,590,296,565,331,543,362,560,398,630,429,685,464,740,499,825,531,872,566,908,597,928,632,940,699,940,735,925,766,890,801,865,833,825,868,795,899,770,935,755,970,745,1001,742,1036,730,1068,715,1103,725,1135,740,1170,745,1236,747,1271,755,1338,757,1370,775,1405,795,1440,825,1472,845,1507,870,1538,888,1568,892],
      [0,1012,37,1005,72,997,107,983,139,945,174,860,205,790,241,735,272,650,307,577,343,560,374,535,410,520,441,515,476,525,508,585,543,620,578,663,610,720,645,790,676,825,712,850,743,870,778,890,813,925,845,950,880,975,911,1015,946,1045,978,1060,1013,1068,1048,1075,1080,1040,1115,1020,1147,995,1182,975,1213,958]
    ],
    m: [
      [17,793,50,790,84,775,116,755,151,725,186,710,217,695,253,668,284,645,319,630,351,647,386,660,421,650,453,647,488,655,586,655,621,663,688,666,723,676,755,676,790,668,821,660,856,635,892,618,923,595,958,587,990,597,1056,602,1092,637,1127,672,1158,675,1193,700,1225,722,1260,730,1327,735,1393,737,1429,745,1460,775,1495,820,1527,860,1562,893],
      [0,958,29,980,61,982,96,960,127,930,163,905,194,865,229,826,265,815,296,800,331,792,398,790,429,780,464,775,531,772,566,768,597,760,632,755,664,741,699,750,735,770,766,790,801,795,833,815,868,835,899,843,1001,843,1036,830,1068,815,1135,800,1170,790,1205,775,1236,760,1271,755,1338,745,1370,747,1405,755,1440,770,1472,790,1507,812,1538,818,1568,820],
      [0,938,37,938,72,932,107,928,139,920,174,885,205,870,241,850,272,820,307,795,343,785,374,770,410,757,441,748,476,735,508,722,543,710,578,700,610,688,645,682,676,685,712,690,743,698,778,703,813,722,845,768,880,795,911,835,946,880,978,922,1013,945,1048,960,1213,960]
    ],
    g: [
      [17,268,50,282,84,290,151,302,186,312,217,332,253,352,319,387,351,422,386,442,421,457,453,472,519,508,554,515,586,527,656,560,688,582,723,597,755,605,821,615,856,625,923,632,958,640,990,655,1025,675,1092,695,1127,712,1158,720,1225,730,1327,731,1510,735,1527,731,1568,735],
      [0,785,29,773,61,763,96,757,163,750,194,745,265,746,331,755,398,764,516,766,597,783,664,785,699,792,850,795,916,797,1001,795,1100,795,1135,790,1170,786,1205,780,1236,790,1271,797,1338,812,1370,827,1405,835,1440,842,1507,845,1538,836,1568,830],
      [0,947,37,947,72,935,107,932,139,930,174,910,205,900,241,885,272,870,307,858,343,850,410,837,441,826,490,826,543,840,610,855,676,862,712,867,880,867,911,871,1048,871,1080,861,1147,853,1182,853,1213,858]
    ]
  };
  function maPoints(arrs) {
    var out = [];
    arrs.forEach(function (a, k) {
      var s = segs[k];
      for (var i = 0; i < a.length; i += 2) out.push([s.ox + a[i] / 2.6133, s.oy + a[i + 1] / s.sy]);
    });
    return out;
  }

  function hollowOrFilled(s, x, top, bot, t, width) {
    var h = Math.max(bot - top, 1.5);
    if (t === 'r') {
      el(s, 'rect', { x: x - width / 2 + 0.8, y: top, width: width - 1.6, height: h, fill: '#000', stroke: RD, 'stroke-width': 1.6 });
    } else {
      el(s, 'rect', { x: x - width / 2, y: top, width: width, height: h, fill: t === 'w' ? '#fff' : CY });
    }
  }

  var sp = document.getElementById('svgPrice');
  var priceYs = [130, 173, 217, 259, 302, 346, 389, 433, 476, 520, 563, 606, 649];
  var priceLb = ['20.50', '20.00', '19.50', '19.00', '18.50', '18.00', '17.50', '17.00', '16.50', '16.00', '15.50', '15.00', '14.50'];
  priceYs.forEach(function (y) { hline(sp, y, 0, 1711, DOT, 1, '2 4.2'); });

  var idx = 0;
  groups.forEach(function (g) {
    g.rows.forEach(function (r) {
      var x = cx(idx++);
      var c = r[4] === 'c' ? CY : r[4] === 'w' ? '#fff' : RD;
      vline(sp, x, g.oy + r[0] / g.sy, g.oy + r[3] / g.sy, c, 1.5);
      hollowOrFilled(sp, x, g.oy + r[1] / g.sy, g.oy + r[2] / g.sy, r[4], 10.4);
    });
  });
  poly(sp, maPoints(MA.g), '#00d400', 1.6);
  poly(sp, maPoints(MA.m), '#ea00ea', 1.5);
  poly(sp, maPoints(MA.y), '#dada00', 1.5);
  poly(sp, maPoints(MA.w), '#e8e8e8', 1.3);

  /* extreme labels */
  poly(sp, [[1279, 97], [1296, 104]], '#aaa', 1.2);
  poly(sp, [[1283, 96], [1279, 97], [1282, 101]], '#aaa', 1.2);
  el(sp, 'text', { x: 1300, y: 113, class: 'note' }, '20.86');
  poly(sp, [[431, 657], [449, 657]], '#aaa', 1.2);
  poly(sp, [[435, 653], [431, 657], [435, 661]], '#aaa', 1.2);
  el(sp, 'text', { x: 451, y: 666, class: 'note' }, '14.41');

  /* top right glyphs */
  el(sp, 'path', { d: 'M1669 74l7 8-7 8-7-8z', fill: 'none', stroke: '#888', 'stroke-width': 1.2 });
  el(sp, 'rect', { x: 1689, y: 75, width: 14, height: 15, rx: 2, fill: 'none', stroke: '#888', 'stroke-width': 1.6 });
  el(sp, 'rect', { x: 1696, y: 77, width: 5, height: 11, fill: '#888' });

  /* axis */
  vline(sp, 1711.5, 67, 687, AX, 1.5);
  priceYs.forEach(function (y, i) {
    hline(sp, y, 1711, 1719, AX, 1.5);
    if (i < priceYs.length - 1) hline(sp, (y + priceYs[i + 1]) / 2, 1711, 1715, AX, 1);
    el(sp, 'text', { x: 1778, y: y + 6.5, 'text-anchor': 'end', class: 'axis' }, priceLb[i]);
  });
  hline(sp, 686.5, 0, 1787, '#b00000', 2);
  el(sp, 'rect', { x: 540, y: 615, width: 1080, height: 72, fill: '#000' });

  /* ---------- indicator pane ---------- */
  var si = document.getElementById('svgInd');
  var indYs = [730, 779, 827, 877, 925, 974, 1024];
  var indLb = ['21.00', '20.00', '19.00', '18.00', '17.00', '16.00', '15.00'];
  indYs.forEach(function (y) { hline(si, y, 0, 1711, DOT, 1, '2 4.2'); });

  var GR = '#00ff00', BR = '#e00000';
  var sigs = [
    [70.7, 838, '卖出', GR], [133.6, 853, '卖出', GR], [366, 781, '卖出', GR],
    [674, 757, '卖出', GR], [906, 805, '卖出', GR], [1626, 853, '卖出', GR],
    [288, 958, '买入', BR], [18, 996, '买入', BR], [443, 1006, '买入', BR], [430.6, 1058, '买入', BR],
    [803, 957, '买入', BR], [1137, 943, '买入', BR], [1548, 966, '买入', BR], [1561, 963, '买入', BR]
  ];
  sigs.forEach(function (m) {
    var buy = m[3] === BR;
    el(si, 'text', { x: m[0] + 1, y: m[1] + (buy ? 7 : -2), fill: m[3], class: 'sig' }, m[2]);
  });
  function mark(x, y, c) {
    el(si, 'path', { d: 'M' + (x - 4.5) + ' ' + (y - 4.5) + 'l9 9m0-9l-9 9', stroke: c, 'stroke-width': 4.2, fill: 'none' });
  }
  sigs.forEach(function (m) { mark(m[0], m[1], m[3] === GR ? GR : '#ffff00'); });
  [[198, 940], [301.6, 950], [18, 1005], [481.6, 1016], [610.7, 1001], [893, 940], [1008, 925], [1202, 947], [1601, 958]].forEach(function (p) {
    mark(p[0], p[1], '#ff00ff');
  });

  var line = [];
  var l5 = [13,705,70,705,120,680,180,665,240,635,290,605,320,605,380,615,490,615,590,643,630,643,690,610,750,602,790,578,830,578,900,605,1000,650,1050,657,1105,678,1215,678,1320,740,1420,740,1470,714,1500,712,1568,687];
  var l11 = [57,865,110,858,150,854,295,852,300,849,405,848,440,840,480,838,520,826,590,827,640,845,700,862,750,876,880,876,950,858,1030,854,1065,840,1140,840,1140,835,1320,835,1390,858,1465,858,1470,863,1560,863,1568,858];
  var l12 = [0,858,70,828,155,803,195,783,300,777,410,763,450,750,560,738,665,738,745,747,815,760,855,790,1005,862,1040,867,1145,867,1150,872,1182,872];
  var i;
  for (i = 0; i < l5.length; i += 2) line.push([l5[i] / 2.178, 680 + l5[i + 1] / 3]);
  for (i = 2; i < l11.length; i += 2) line.push([700 + l11[i] / 2.851, 620 + l11[i + 1] / 3]);
  for (i = 0; i < l12.length; i += 2) line.push([1250 + l12[i] / 2.851, 620 + l12[i + 1] / 3]);
  poly(si, line, '#ffffff', 2.6);

  vline(si, 1711.5, 687, 1067, '#c00000', 3);
  indYs.forEach(function (y, k) {
    hline(si, y, 1711, 1719, AX, 1.5);
    if (k < indYs.length - 1) hline(si, (y + indYs[k + 1]) / 2, 1711, 1715, AX, 1);
    el(si, 'text', { x: 1778, y: y + 6.5, 'text-anchor': 'end', class: 'axis' }, indLb[k]);
  });
  el(si, 'rect', { x: 1713, y: 831, width: 72, height: 23, fill: '#000080' });
  hline(si, 831, 1713, 1787, '#c00000', 1.5);
  hline(si, 854, 1713, 1787, '#c00000', 1.5);
  el(si, 'text', { x: 1713, y: 848, class: 'navy' }, '18.45');
  hline(si, 1066, 0, 1787, '#b00000', 2);
  el(si, 'rect', { x: 540, y: 687, width: 1080, height: 65, fill: '#000' });

  /* ---------- volume pane ---------- */
  var sv = document.getElementById('svgVol');
  [1140, 1186, 1232].forEach(function (y) { hline(sv, y, 0, 1711, DOT, 1, '2 4.2'); });
  var vols = 'c480 r482 r467 r404 r220 c363 r422 r404 r467 r386 c314 r413 r350 c435 c453 r386 c462 c484 c484 c489 r512 c543 r395 r156 c107 r354 c435 r462 c453 c453 c480 r498 c462 c466 r431 c466 r512 r364 r498 r539 r562 r512 r566 c575 c552 r548 r580 r386 r197 c291 c404 r462 c300 c413 c476 r512 c539 c570 c539 r436 c512 c566 r584 r575 c561 c570 r535 r580 r521 r418 r391 c525 c534 r584 c566 c561 r557 c578 r535 r504 c580 r593 r589 c566 c548 c602 c602 c580 r590 r607 r593 c589 r595 r476 c561 c575 r575 r422 r175 c124 c398 r476 r512 c272 c507 c444 c525 r525 c552 r543 r557 c557 r512 c539 r570 c552 c557 c584 c548 r602 c575 r607 r616 r580 r580 r431 c512 r557 c566 r589'.split(' ');
  vols.forEach(function (v, n) {
    var top = 1060 + (+v.slice(1)) / 3;
    hollowOrFilled(sv, cx(n), top, 1279.5, v.charAt(0), 10.4);
  });
  function volPts(a, ox) {
    var o = [];
    for (var j = 0; j < a.length; j += 2) o.push([ox + a[j] / 1.452, 1060 + a[j + 1] / 3]);
    return o;
  }
  var vw = volPts([10,500,35,500,55,500,75,440,100,395,120,378,140,365,160,380,180,407,214,395,240,385,270,400,300,420,325,450,360,460,385,490,402,505,420,485,440,400,460,330,480,300,497,292,515,310,530,370,550,435,570,460,600,473,660,470,680,470,705,450,730,462,755,488,780,510,800,540,825,550,850,552,866,568,886,520,904,460,923,405,942,370,978,335,998,380,1017,410,1050,450,1073,500,1092,525,1129,522,1166,527,1200,560,1222,568,1259,568,1290,545,1315,490,1353,478,1371,495,1409,550,1446,572,1484,548,1521,565,1568,565], 0)
    .concat(volPts([0,580,47,580,65,585,103,598,158,592,177,570,195,558,233,558,270,470,289,370,327,318,362,355,382,435,420,452,438,460,457,512,476,517,513,548,550,540,606,555,662,570,699,585,737,598,755,590,792,540,811,533,847,530], 1080));
  var vy = volPts([10,478,30,485,55,497,75,480,100,448,121,432,158,427,180,405,214,385,238,373,270,395,290,408,325,418,360,423,385,450,420,470,440,430,457,403,476,398,515,395,532,387,570,385,606,385,625,415,643,450,680,472,705,458,730,470,755,482,780,482,830,515,866,530,886,530,923,480,942,463,960,460,998,415,1017,402,1054,400,1092,450,1129,472,1148,483,1185,530,1203,543,1241,550,1278,547,1334,523,1440,523,1465,527,1502,550,1521,560,1568,562], 0)
    .concat(volPts([0,562,47,575,65,575,103,585,158,585,177,575,195,578,233,575,251,540,289,460,307,445,345,432,365,408,401,393,420,387,438,395,457,440,476,480,495,495,532,498,550,525,569,537,606,548,643,558,699,565,737,580,755,580,774,570,792,565,847,563], 1080));
  poly(sv, vw, '#e8e8e8', 1.3);
  poly(sv, vy, '#e6e600', 1.8);

  vline(sv, 1711.5, 1067, 1281, AX, 1.5);
  [[1140, '30000'], [1186, '20000'], [1232, '10000']].forEach(function (a) {
    hline(sv, a[0], 1711, 1719, AX, 1.5);
    hline(sv, a[0] + 23, 1711, 1715, AX, 1);
    hline(sv, a[0] - 23, 1711, 1715, AX, 1);
    el(sv, 'text', { x: 1778, y: a[0] + 6.5, 'text-anchor': 'end', class: 'axis' }, a[1]);
  });
  el(sv, 'rect', { x: 1712, y: 1260, width: 37, height: 21, fill: 'none', stroke: '#800', 'stroke-width': 1 });
  el(sv, 'text', { x: 1714, y: 1277, class: 'axis' }, 'X10');
  hline(sv, 1281, 0, 1787, '#b00000', 2);
  [236, 298, 358, 419, 480, 545, 603, 664, 730, 790, 866, 930, 995, 1060, 1130, 1198, 1266, 1338, 1413, 1486, 1560].forEach(function (x) {
    vline(sv, x, 1281, 1286, '#a00000', 1);
  });
})();
```
